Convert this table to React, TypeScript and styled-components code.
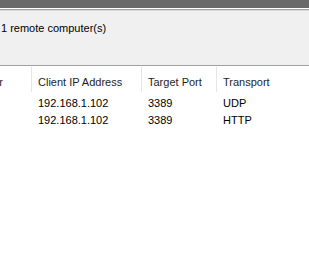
import React from "react";
import styled, { createGlobalStyle } from "styled-components";

const GlobalStyle = createGlobalStyle`
  html, body {
    margin: 0;
    padding: 0;
    background: #ffffff;
  }
  body {
    width: 309px;
    height: 273px;
    overflow: hidden;
    font-family: "Liberation Sans", Arial, sans-serif;
    font-size: 11px;
    color: #000;
  }
`;

type Column = { title: string; width: number };

const columns: Column[] = [
  { title: "Server", width: 32 },
  { title: "Client IP Address", width: 110 },
  { title: "Target Port", width: 75 },
  { title: "Transport", width: 100 },
];

const rows = [
  ["", "192.168.1.102", "3389", "UDP"],
  ["", "192.168.1.102", "3389", "HTTP"],
];

export default function App() {
  return (
    <Window>
      <GlobalStyle />
      <TitleStrip />
      <InfoPanel>
        <InfoText>1 remote computer(s)</InfoText>
      </InfoPanel>
      <List>
        <HeaderRow>
          {columns.map((c, i) => (
            <HeaderCell key={c.title} $width={c.width} $first={i === 0}>
              {c.title}
            </HeaderCell>
          ))}
        </HeaderRow>
        <Body>
          {rows.map((r, ri) => (
            <DataRow key={ri}>
              {r.map((v, ci) => (
                <Cell key={ci} $width={columns[ci].width}>
                  {v}
                </Cell>
              ))}
            </DataRow>
          ))}
        </Body>
      </List>
    </Window>
  );
}

const Window = styled.div`
  width: 309px;
  height: 273px;
  display: flex;
  flex-direction: column;
  background: #fff;
`;

const TitleStrip = styled.div`
  height: 8px;
  background: #696969;
  border-bottom: 1px solid #ffffff;
  flex: 0 0 auto;
`;

const InfoPanel = styled.div`
  height: 55px;
  background: #f0f0f0;
  border-top: 1px solid #a0a0a0;
  border-bottom: 1px solid #a0a0a0;
  box-shadow: inset 0 1px 0 #d8d8d8;
  flex: 0 0 auto;
`;

const InfoText = styled.div`
  padding: 12px 0 0 1px;
  font-size: 11px;
  white-space: nowrap;
  color: #000;
`;

const List = styled.div`
  flex: 1;
  background: #fff;
  overflow: hidden;
`;

const HeaderRow = styled.div`
  display: flex;
  height: 25px;
  margin-top: 1px;
`;

const HeaderCell = styled.div<{ $width: number; $first?: boolean }>`
  flex: 0 0 ${({ $width }) => $width}px;
  box-sizing: border-box;
  display: flex;
  align-items: center;
  justify-content: ${({ $first }) => ($first ? "flex-end" : "flex-start")};
  padding: ${({ $first }) => ($first ? "4px 28px 0 0" : "4px 0 0 6px")};
  border-right: 1px solid #e5e5e5;
  font-size: 11px;
  white-space: nowrap;
  overflow: hidden;
  color: #1e1e1e;
`;

const Body = styled.div`
  margin-top: 2px;
`;

const DataRow = styled.div`
  display: flex;
  height: 17px;
  align-items: center;
`;

const Cell = styled.div<{ $width: number }>`
  flex: 0 0 ${({ $width }) => $width}px;
  box-sizing: border-box;
  padding-left: 6px;
  font-size: 11px;
  white-space: nowrap;
  overflow: hidden;
`;
